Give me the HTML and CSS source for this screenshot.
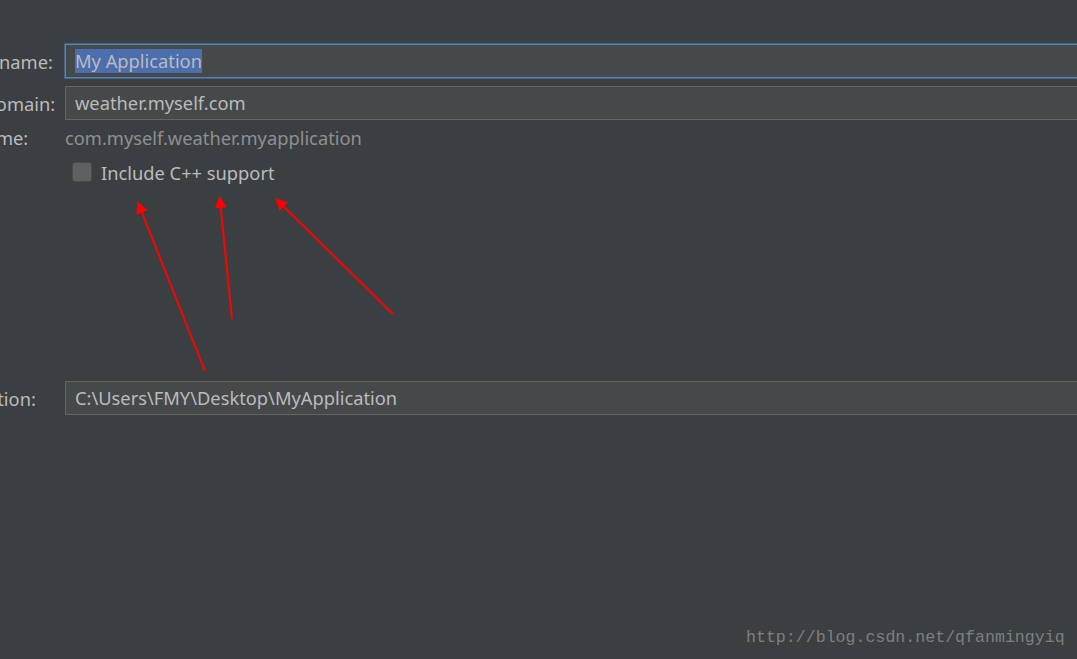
FILE: index.html
```html
<!DOCTYPE html>
<html lang="en">
<head>
    <meta charset="UTF-8">
    <meta name="viewport" content="width=device-width, initial-scale=1.0">
    <title>Create New Project</title>
    <link rel="stylesheet" href="styles.css">
</head>
<body>
    <div class="form">
        <div class="row">
            <label class="label">Application name:</label>
            <div class="field focused"><span class="selected">My Application</span></div>
        </div>
        <div class="row domain">
            <label class="label">Company domain:</label>
            <div class="field">weather.myself.com</div>
        </div>
        <div class="row plain package">
            <label class="label">Package name:</label>
            <div class="value">com.myself.weather.myapplication</div>
        </div>
        <div class="row plain check-row">
            <span class="label"></span>
            <div class="check">
                <span class="box"></span>
                <span>Include C++ support</span>
            </div>
        </div>
        <div class="row location">
            <label class="label">Project location:</label>
            <div class="field">C:\Users\FMY\Desktop\MyApplication</div>
        </div>
    </div>

    <!-- red annotation arrows -->
    <svg class="arrows" width="1077" height="659" viewBox="0 0 1077 659">
        <defs>
            <marker id="head" markerWidth="6" markerHeight="6" refX="4" refY="3" orient="auto" markerUnits="strokeWidth">
                <path d="M0,0 L6,3 L0,6 Z" fill="#ff0000"/>
            </marker>
        </defs>
        <line x1="205" y1="371" x2="139" y2="205" stroke="#ff0000" stroke-width="2" marker-end="url(#head)"/>
        <line x1="232" y1="319" x2="220" y2="200" stroke="#ff0000" stroke-width="2" marker-end="url(#head)"/>
        <line x1="393" y1="314" x2="278" y2="201" stroke="#ff0000" stroke-width="2" marker-end="url(#head)"/>
    </svg>

    <div class="watermark">http://blog.csdn.net/qfanmingyiq</div>
</body>
</html>
```

FILE: styles.css
```css
body {
    margin: 0;
    background: #3c3f41;
    color: #bbbbbb;
    font-family: "Noto Sans", "Open Sans", sans-serif;
    font-size: 18.3px;
    height: 659px;
    overflow: hidden;
    position: relative;
}

.form {
    display: flex;
    flex-direction: column;
    padding-top: 44px;
    margin-left: -102px;
    margin-right: -40px;
}

.row {
    display: flex;
    align-items: center;
}

.label {
    width: 167px;
    flex-shrink: 0;
    white-space: nowrap;
}

.field {
    flex: 1;
    height: 32px;
    line-height: 32px;
    padding: 0 9px;
    background: #45494a;
    border: 1px solid #646464;
    white-space: nowrap;
}

.field.focused {
    border-color: #5a82b8;
    box-shadow: 0 0 0 1px #3f6490;
}

.selected {
    background: #4b6eaf;
    display: inline-block;
    line-height: 24px;
}

.domain {
    margin-top: 8px;
}

.plain {
    height: 22px;
}

.package {
    margin-top: 6px;
}

.value {
    color: #8e9092;
}

.check-row {
    margin-top: 13px;
}

.check {
    display: flex;
    align-items: center;
    gap: 9px;
    padding-left: 7px;
}

.box {
    width: 18px;
    height: 18px;
    background: #5f6061;
    border: 1px solid #4a4b4c;
    border-radius: 3px;
}

.location {
    margin-top: 198px;
}

.arrows {
    position: absolute;
    left: 0;
    top: 0;
    pointer-events: none;
}

.watermark {
    position: absolute;
    left: 746px;
    top: 628px;
    font-family: "Liberation Mono", monospace;
    font-size: 16.6px;
    color: #7d7f80;
}
```
